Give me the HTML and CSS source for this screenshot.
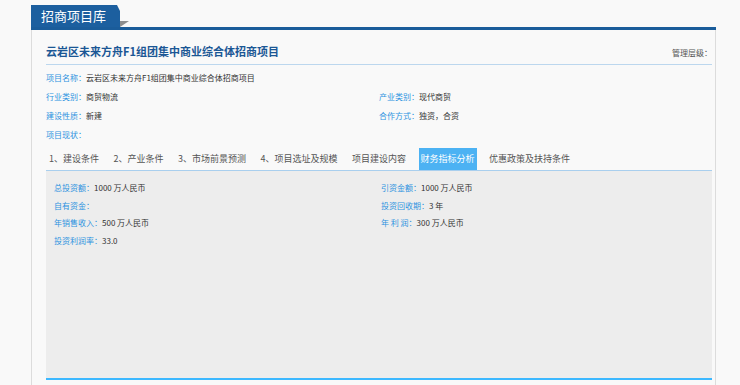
FILE: index.html
```html
<!DOCTYPE html>
<html lang="zh-CN">
<head>
  <meta charset="utf-8">
  <title>招商项目库</title>
  <link rel="stylesheet" href="styles.css">
</head>
<body>
  <div class="page">
    <div class="head">
      <div class="head-tab">招商项目库</div>
      <span class="head-fold"></span>
    </div>
    <div class="box">
      <div class="title-row">
        <h1 class="title">云岩区未来方舟F1组团集中商业综合体招商项目</h1>
        <span class="level">管理层级：</span>
      </div>
      <div class="info">
        <div class="field"><span class="label">项目名称：</span>云岩区未来方舟F1组团集中商业综合体招商项目</div>
        <div class="field"></div>
        <div class="field"><span class="label">行业类别：</span>商贸物流</div>
        <div class="field"><span class="label">产业类别：</span>现代商贸</div>
        <div class="field"><span class="label">建设性质：</span>新建</div>
        <div class="field"><span class="label">合作方式：</span>独资，合资</div>
        <div class="field"><span class="label">项目现状：</span></div>
      </div>
      <ul class="tabs">
        <li>1、建设条件</li>
        <li>2、产业条件</li>
        <li>3、市场前景预测</li>
        <li>4、项目选址及规模</li>
        <li>项目建设内容</li>
        <li class="active">财务指标分析</li>
        <li>优惠政策及扶持条件</li>
      </ul>
      <div class="panel">
        <div class="field"><span class="label">总投资额：</span>1000 万人民币</div>
        <div class="field"><span class="label">引资金额：</span>1000 万人民币</div>
        <div class="field"><span class="label">自有资金：</span></div>
        <div class="field"><span class="label">投资回收期：</span>3 年</div>
        <div class="field"><span class="label">年销售收入：</span>500 万人民币</div>
        <div class="field"><span class="label">年 利 润：</span>300 万人民币</div>
        <div class="field"><span class="label">投资利润率：</span>33.0</div>
      </div>
    </div>
  </div>
</body>
</html>
```

FILE: styles.css
```css
body {
  margin: 0;
  background: #f9f9f9;
  font-family: "Noto Sans CJK SC", "Noto Sans", sans-serif;
  color: #333;
  text-spacing-trim: space-all;
}
.page {
  padding: 5px 24px 0 31px;
}
.head {
  display: flex;
  align-items: flex-start;
  border-bottom: 3px solid #1a5c9a;
}
.head-tab {
  height: 22px;
  line-height: 22px;
  padding: 0 14px 0 10px;
  background: #1c5f9f;
  color: #fff;
  font-size: 13px;
  clip-path: polygon(0 0, 86px 0, 100% 6px, 100% 100%, 0 100%);
}
.head-fold {
  margin-top: 16px;
  width: 0;
  height: 0;
  border-top: 6px solid #8e8e8e;
  border-right: 9px solid transparent;
}
.box {
  background: #f9f9f9;
  border-left: 1px solid #dcdcdc;
  border-right: 1px solid #dcdcdc;
  padding: 13px 3px 8px 14px;
}
.title-row {
  display: flex;
  justify-content: space-between;
  align-items: baseline;
  border-bottom: 1px solid #bcd7ee;
  padding-bottom: 4px;
}
.title {
  margin: 0;
  font-size: 11px;
  line-height: 17px;
  font-weight: bold;
  color: #1b5795;
}
.level {
  font-size: 8px;
  color: #555;
}
.info {
  display: grid;
  grid-template-columns: 1fr 1fr;
  margin-top: 3px;
}
.field {
  font-size: 8px;
  line-height: 19px;
  white-space: nowrap;
}
.label {
  color: #2d93e0;
}
.tabs {
  list-style: none;
  margin: 4px 0 0;
  padding: 0 0 0 1px;
  display: flex;
  gap: 10.5px;
  border-bottom: 1px solid #a9cfee;
}
.tabs li {
  font-size: 9px;
  line-height: 22px;
  padding: 0 2px;
  color: #555;
}
.tabs li.active {
  background: #4cb2f3;
  color: #fff;
}
.panel {
  display: grid;
  grid-template-columns: 1fr 1fr;
  align-content: start;
  background: #ededed;
  height: 199px;
  padding: 8px 8px 0 8px;
  border-bottom: 2px solid #3cb8ff;
}
.panel .field {
  line-height: 17.7px;
}
.panel .field:nth-child(even) {
  padding-left: 2px;
}
```
